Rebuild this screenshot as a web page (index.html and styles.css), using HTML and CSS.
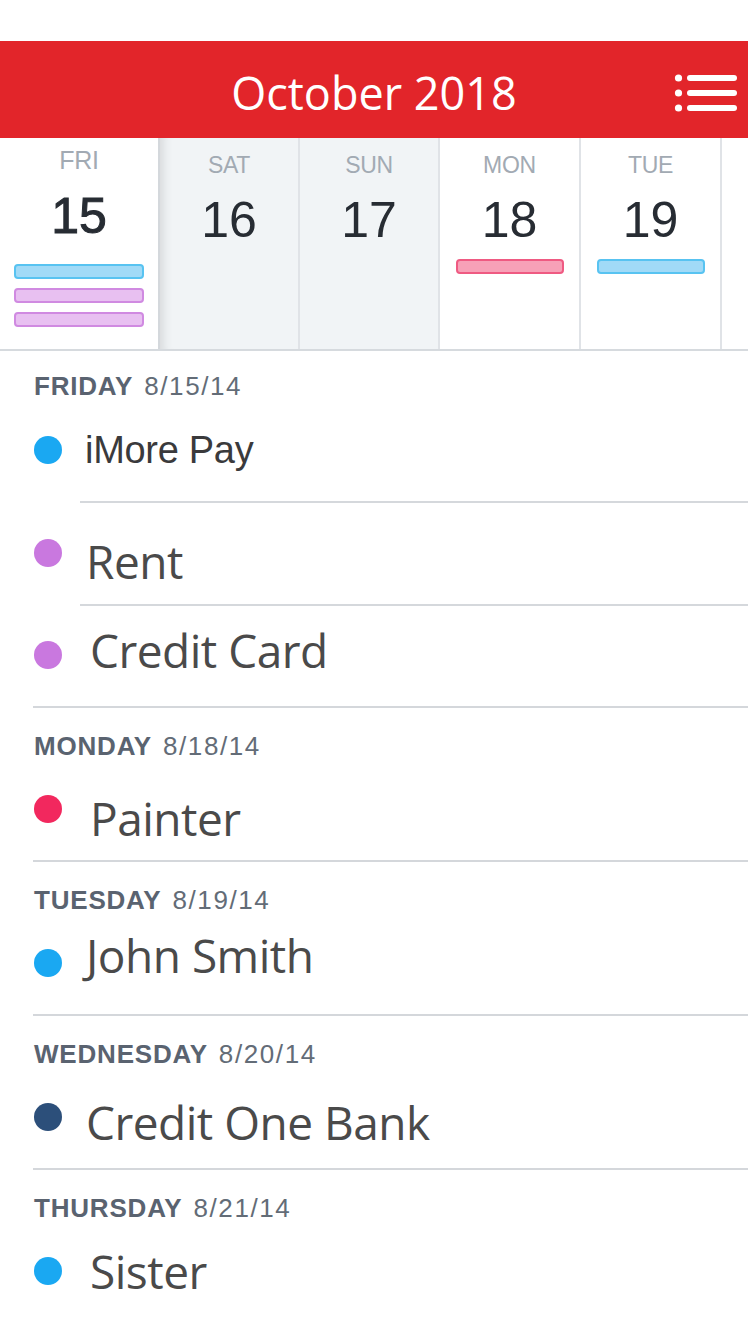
FILE: index.html
```html
<!DOCTYPE html>
<html lang="en">
<head>
<meta charset="utf-8">
<title>October 2018</title>
<link rel="stylesheet" href="styles.css">
</head>
<body>
<div class="app">
  <header class="topbar">
    <span class="spacer"></span>
    <h1 class="title">October 2018</h1>
    <div class="menu">
      <svg width="64" height="40" viewBox="0 0 64 40" aria-hidden="true">
        <g fill="#fff">
          <circle cx="4.5" cy="4" r="3.6"/>
          <circle cx="4.5" cy="19" r="3.6"/>
          <circle cx="4.5" cy="34" r="3.6"/>
        </g>
        <g stroke="#fff" stroke-width="6" stroke-linecap="round">
          <line x1="16" y1="4" x2="60" y2="4"/>
          <line x1="16" y1="19" x2="60" y2="19"/>
          <line x1="16" y1="34" x2="60" y2="34"/>
        </g>
      </svg>
    </div>
  </header>

  <div class="week">
    <div class="day day-sel">
      <div class="dname">FRI</div>
      <div class="dnum">15</div>
      <div class="bars">
        <span class="bar bar-blue"></span>
        <span class="bar bar-purple"></span>
        <span class="bar bar-purple"></span>
      </div>
    </div>
    <div class="day day-weekend day-sat">
      <div class="dname">SAT</div>
      <div class="dnum">16</div>
    </div>
    <div class="day day-weekend">
      <div class="dname">SUN</div>
      <div class="dnum">17</div>
    </div>
    <div class="day">
      <div class="dname">MON</div>
      <div class="dnum">18</div>
      <div class="bars"><span class="bar bar-pink"></span></div>
    </div>
    <div class="day">
      <div class="dname">TUE</div>
      <div class="dnum">19</div>
      <div class="bars"><span class="bar bar-blue"></span></div>
    </div>
    <div class="day"></div>
  </div>

  <main class="agenda">
    <section class="group">
      <div class="group-head"><span class="wd">FRIDAY</span><span class="dt">8/15/14</span></div>
      <ul class="events">
        <li class="event"><span class="dot dot-blue"></span><span class="ev-name ev-helv">iMore Pay</span></li>
        <li class="event"><span class="dot dot-purple"></span><span class="ev-name down-8">Rent</span></li>
        <li class="event"><span class="dot dot-purple"></span><span class="ev-name up-5 shift-r">Credit Card</span></li>
      </ul>
    </section>
    <section class="group">
      <div class="group-head"><span class="wd">MONDAY</span><span class="dt">8/18/14</span></div>
      <ul class="events">
        <li class="event"><span class="dot dot-pink"></span><span class="ev-name down-9 shift-r">Painter</span></li>
      </ul>
    </section>
    <section class="group">
      <div class="group-head"><span class="wd">TUESDAY</span><span class="dt">8/19/14</span></div>
      <ul class="events">
        <li class="event"><span class="dot dot-blue"></span><span class="ev-name up-8">John Smith</span></li>
      </ul>
    </section>
    <section class="group">
      <div class="group-head"><span class="wd">WEDNESDAY</span><span class="dt">8/20/14</span></div>
      <ul class="events">
        <li class="event"><span class="dot dot-navy"></span><span class="ev-name down-5">Credit One Bank</span></li>
      </ul>
    </section>
    <section class="group group-last">
      <div class="group-head"><span class="wd">THURSDAY</span><span class="dt">8/21/14</span></div>
      <ul class="events">
        <li class="event"><span class="dot dot-blue"></span><span class="ev-name shift-r">Sister</span></li>
      </ul>
    </section>
  </main>
</div>
</body>
</html>
```

FILE: styles.css
```css
* { box-sizing: border-box; }

html, body {
  margin: 0;
  padding: 0;
  background: #ffffff;
}

body {
  font-family: "Liberation Sans", Arial, sans-serif;
  overflow: hidden;
}

.app {
  width: 748px;
  padding-top: 41px;
}

/* ---------- top bar ---------- */
.topbar {
  height: 97px;
  background: #e2252a;
  display: grid;
  grid-template-columns: 1fr auto 1fr;
}

.title {
  margin: 0;
  padding-top: 29px;
  font-family: "Open Sans", sans-serif;
  font-weight: 400;
  font-size: 45px;
  line-height: 45px;
  color: #ffffff;
  text-align: center;
}

.menu {
  justify-self: end;
  padding-top: 33px;
  padding-right: 10px;
}

.menu svg { display: block; }

/* ---------- week strip ---------- */
.week {
  height: 213px;
  display: grid;
  grid-template-columns: 158px 140px 140px 141px 141px 1fr;
  border-bottom: 2px solid #d6dade;
}

.day {
  border-left: 2px solid #e0e3e7;
  display: flex;
  flex-direction: column;
  align-items: center;
  padding-top: 15px;
}

.day-sel {
  border-left: 0;
  padding-top: 10px;
}

.day-weekend {
  background: #f1f4f6;
}

.day-sat {
  border-left: 2px solid #d4d8dc;
  box-shadow: inset 12px 0 10px -8px rgba(0, 0, 0, 0.10);
}

.dname {
  font-size: 23px;
  line-height: 24px;
  letter-spacing: -0.3px;
  color: #a2aab3;
}

.day-sel .dname {
  font-size: 25px;
  line-height: 25px;
}

.dnum {
  margin-top: 18px;
  font-size: 50px;
  line-height: 50px;
  color: #272c33;
}

.day-sel .dnum {
  -webkit-text-stroke: 1px #272c33;
}

.bars {
  margin-top: 14px;
  width: 108px;
  display: flex;
  flex-direction: column;
  gap: 9px;
}

.day-sel .bars {
  margin-top: 23px;
  width: 130px;
}

.bar {
  display: block;
  height: 15px;
  border-radius: 4px;
  border: 2px solid;
}

.bar-blue   { background: #a1daf7; border-color: #58c3f1; }
.bar-purple { background: #e8c0f1; border-color: #d08ae1; }
.bar-pink   { background: #f7a1b8; border-color: #ef5a82; }

/* ---------- agenda ---------- */
.agenda {
  display: flex;
  flex-direction: column;
}

.group {
  margin-left: 33px;
  border-bottom: 2px solid #d4d7db;
}

.group-last { border-bottom: 0; }

.group-head {
  height: 50px;
  padding-top: 25px;
  padding-left: 1px;
  font-size: 26px;
  line-height: 26px;
  color: #5d6671;
  white-space: nowrap;
}

.group:first-child .group-head {
  height: 47px;
  padding-top: 22px;
}

.wd {
  font-weight: 700;
  letter-spacing: 0.8px;
  color: #5a6370;
}

.dt {
  margin-left: 11px;
  letter-spacing: 1.6px;
  color: #636c77;
}

.events {
  list-style: none;
  margin: 0;
  padding: 0;
}

.event {
  height: 103px;
  display: flex;
  align-items: center;
  padding-left: 1px;
}

.event:last-child { height: 102px; }

.event + .event {
  background: linear-gradient(#d5d8dc, #d5d8dc) 47px 0 / 100% 2px no-repeat;
}

.dot {
  flex: none;
  width: 28px;
  height: 28px;
  border-radius: 50%;
}

.dot-blue   { background: #1aa8f2; }
.dot-purple { background: #c978df; }
.dot-pink   { background: #f2285e; }
.dot-navy   { background: #2c4f7a; }

.ev-name {
  margin-left: 24px;
  font-family: "Open Sans", sans-serif;
  font-size: 46px;
  line-height: 46px;
  letter-spacing: -0.5px;
  color: #4a4a4a;
  white-space: nowrap;
}

.ev-helv {
  font-family: "Liberation Sans", Arial, sans-serif;
  font-size: 38px;
  line-height: 38px;
  letter-spacing: -0.3px;
  color: #3a3a3c;
  margin-left: 23px;
}

.shift-r { margin-left: 28px; }

.down-5 { margin-top: 10px; }
.down-8 { margin-top: 16px; }
.down-9 { margin-top: 18px; }
.up-5   { margin-bottom: 10px; }
.up-8   { margin-bottom: 16px; }
```
